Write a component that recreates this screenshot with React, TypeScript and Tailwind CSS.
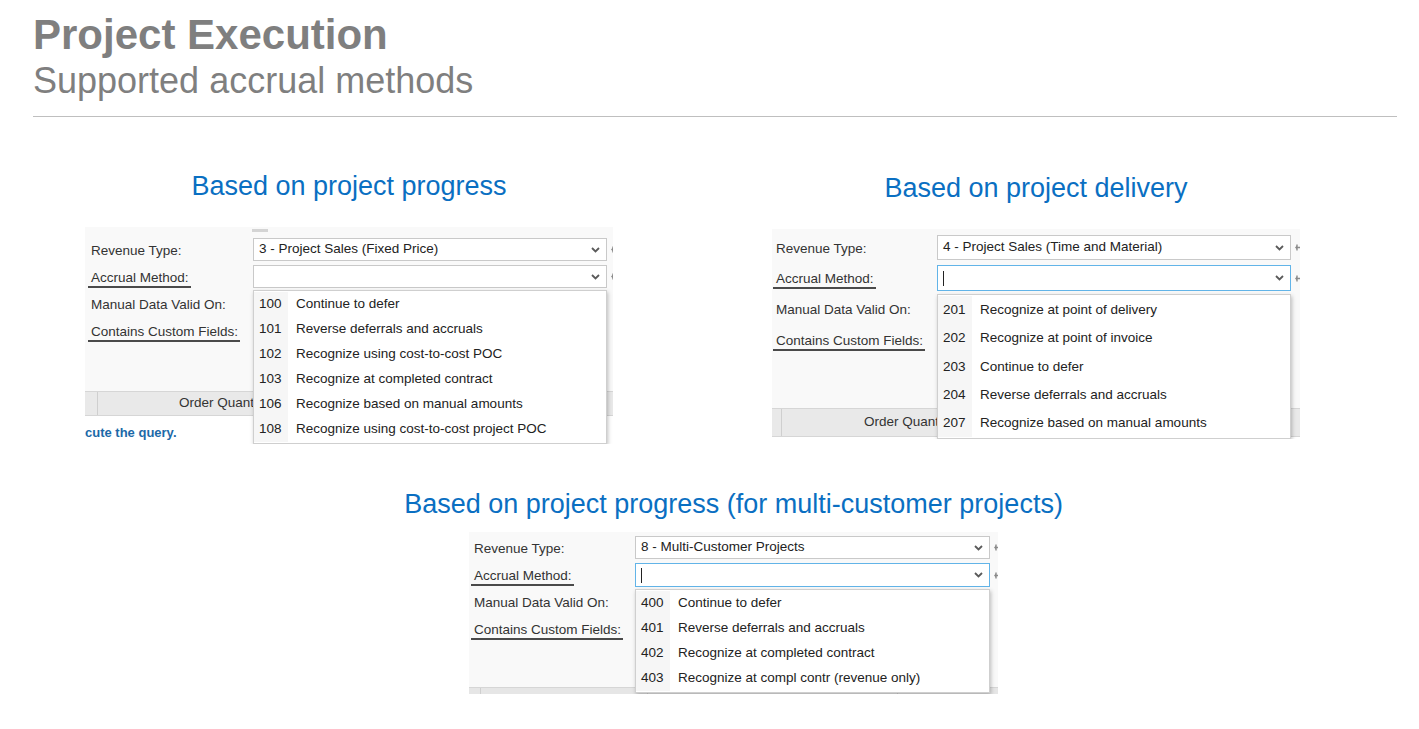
import type { ReactNode } from "react";

type Item = [string, string];

const ITEMS_A: Item[] = [
  ["100", "Continue to defer"],
  ["101", "Reverse deferrals and accruals"],
  ["102", "Recognize using cost-to-cost POC"],
  ["103", "Recognize at completed contract"],
  ["106", "Recognize based on manual amounts"],
  ["108", "Recognize using cost-to-cost project POC"],
];

const ITEMS_B: Item[] = [
  ["201", "Recognize at point of delivery"],
  ["202", "Recognize at point of invoice"],
  ["203", "Continue to defer"],
  ["204", "Reverse deferrals and accruals"],
  ["207", "Recognize based on manual amounts"],
];

const ITEMS_C: Item[] = [
  ["400", "Continue to defer"],
  ["401", "Reverse deferrals and accruals"],
  ["402", "Recognize at completed contract"],
  ["403", "Recognize at compl contr (revenue only)"],
];

function Chevron() {
  return (
    <svg width="9" height="6" viewBox="0 0 9 6" className="mr-[6px] shrink-0">
      <path d="M1 1 L4.5 4.5 L8 1" fill="none" stroke="#5a5a5a" strokeWidth="1.8" />
    </svg>
  );
}

// the value-help pin that sits just past each field (cut off by the screenshot edge)
function Pin() {
  return (
    <svg width="8" height="9" viewBox="0 0 8 9" className="ml-[3px] shrink-0">
      <path d="M1 4.5 L3 2.5 V6.5 Z" fill="#8a8a8a" />
      <path d="M3 1.5 V7.5 M3 4.5 H8" stroke="#8a8a8a" strokeWidth="1.4" />
    </svg>
  );
}

function Select({ value, focused, className }: { value?: string; focused?: boolean; className: string }) {
  return (
    <div
      className={`flex shrink-0 items-center bg-white border ${
        focused ? "border-[#62b4e8]" : "border-[#c9c9c9]"
      } ${className}`}
    >
      <div className="flex flex-1 items-center pl-[5px] text-[13.5px] text-[#222]">
        {focused ? <span className="h-[15px] w-px bg-[#222]" /> : value}
      </div>
      <Chevron />
    </div>
  );
}

function Label({ text, line }: { text: string; line?: boolean }) {
  if (!line) return <span className="text-[13.5px] text-[#333]">{text}</span>;
  return (
    <span className="-ml-[3px] border-b-2 border-[#4a4a4a] pb-[1px] pl-[3px] pr-[2px] text-[13.5px] text-[#333]">
      {text}
    </span>
  );
}

function Row({ labelW, className, children }: { labelW: string; className: string; children: ReactNode }) {
  return (
    <div className={`flex items-center ${className}`}>
      <div className={`shrink-0 ${labelW}`}>{children}</div>
    </div>
  );
}

function Dropdown({ items, itemH, className }: { items: Item[]; itemH: string; className: string }) {
  return (
    <div className={`absolute border border-[#cfcfcf] bg-white py-[1px] shadow-[1px_2px_4px_rgba(0,0,0,0.25)] ${className}`}>
      {items.map(([code, text]) => (
        <div key={code} className={`flex ${itemH}`}>
          <div className="flex w-[34px] items-center bg-[#f6f6f6] pl-[5px] text-[13.5px] text-[#222]">{code}</div>
          <div className="flex items-center pl-[8px] text-[13.5px] text-[#222]">{text}</div>
        </div>
      ))}
    </div>
  );
}

function PanelA() {
  return (
    <div className="relative h-[217px] w-[528px] overflow-hidden bg-[#f9f9f9]">
      <div className="ml-[167px] mt-[2px] h-[3px] w-[16px] bg-[#d4d4d4]" />
      <div className="mt-[6px] pl-[6px]">
        <div className="flex h-[23px] items-center">
          <div className="w-[162px] shrink-0"><Label text="Revenue Type:" /></div>
          <Select value="3 - Project Sales (Fixed Price)" className="h-[23px] w-[354px]" />
          <Pin />
        </div>
        <div className="mt-[4px] flex h-[23px] items-center">
          <div className="w-[162px] shrink-0"><Label text="Accrual Method:" line /></div>
          <Select className="h-[23px] w-[354px]" />
          <Pin />
        </div>
        <Row labelW="w-[162px]" className="mt-[3px] h-[26px]"><Label text="Manual Data Valid On:" /></Row>
        <Row labelW="w-[162px]" className="h-[28px]"><Label text="Contains Custom Fields:" line /></Row>
      </div>
      <div className="mt-[46px] flex h-[25px] border-y border-[#d6d6d6] bg-[#e9e9e9] text-[13.5px] text-[#333]">
        <div className="w-[13px] shrink-0 border-r border-[#cfcfcf]" />
        <div className="flex items-center whitespace-nowrap pl-[81px]">Order Quant</div>
      </div>
      <div className="flex h-[30px] items-center bg-white pt-[4px] text-[13px] font-bold text-[#1c69a8]">
        cute the query.
      </div>
      <Dropdown items={ITEMS_A} itemH="h-[25px]" className="left-[168px] top-[63px] w-[354px]" />
    </div>
  );
}

function PanelB() {
  return (
    <div className="relative h-[210px] w-[528px] overflow-hidden bg-white">
      <div className="bg-[#f9f9f9] pl-[4px] pt-[6px] pb-[52px]">
        <div className="flex h-[25px] items-center">
          <div className="w-[161px] shrink-0"><Label text="Revenue Type:" /></div>
          <Select value="4 - Project Sales (Time and Material)" className="h-[25px] w-[354px]" />
          <Pin />
        </div>
        <div className="mt-[5px] flex h-[26px] items-center">
          <div className="w-[161px] shrink-0"><Label text="Accrual Method:" line /></div>
          <Select focused className="h-[26px] w-[354px]" />
          <Pin />
        </div>
        <Row labelW="w-[161px]" className="mt-[2px] h-[31px]"><Label text="Manual Data Valid On:" /></Row>
        <Row labelW="w-[161px]" className="h-[32px]"><Label text="Contains Custom Fields:" line /></Row>
      </div>
      <div className="flex h-[29px] border-y border-[#d6d6d6] bg-[#e9e9e9] text-[13.5px] text-[#333]">
        <div className="w-[10px] shrink-0 border-r border-[#cfcfcf]" />
        <div className="flex items-center whitespace-nowrap pl-[82px]">Order Quant</div>
      </div>
      <Dropdown items={ITEMS_B} itemH="h-[28.25px]" className="left-[165px] top-[65px] w-[354px]" />
    </div>
  );
}

function PanelC() {
  return (
    <div className="relative h-[162px] w-[529px] overflow-hidden bg-[#f9f9f9]">
      <div className="pl-[5px] pt-[4px]">
        <div className="flex h-[23px] items-center">
          <div className="w-[161px] shrink-0"><Label text="Revenue Type:" /></div>
          <Select value="8 - Multi-Customer Projects" className="h-[23px] w-[355px]" />
          <Pin />
        </div>
        <div className="mt-[4px] flex h-[24px] items-center">
          <div className="w-[161px] shrink-0"><Label text="Accrual Method:" line /></div>
          <Select focused className="h-[24px] w-[355px]" />
          <Pin />
        </div>
        <Row labelW="w-[161px]" className="mt-[2px] h-[26px]"><Label text="Manual Data Valid On:" /></Row>
        <Row labelW="w-[161px]" className="h-[27px]"><Label text="Contains Custom Fields:" line /></Row>
      </div>
      <div className="mt-[45px] flex h-[7px] border-t border-[#d6d6d6] bg-[#e6e6e6]">
        <div className="w-[12px] border-r border-[#cfcfcf]" />
        <div className="w-[167px] border-r border-[#cfcfcf]" />
        <div className="w-[250px] border-r border-[#cfcfcf]" />
      </div>
      <Dropdown items={ITEMS_C} itemH="h-[25px]" className="left-[166px] top-[57px] w-[355px]" />
    </div>
  );
}

export default function App() {
  return (
    <div className="min-h-screen overflow-hidden bg-white font-['Liberation_Sans',Arial,sans-serif]">
      <header className="px-[33px] pt-[14px]">
        <h1 className="text-[42px] font-bold leading-none text-[#7f7f7f]">Project Execution</h1>
        <p className="mt-[7px] text-[36px] leading-none text-[#7f7f7f]">Supported accrual methods</p>
      </header>
      <div className="ml-[33px] mt-[17px] h-[1px] w-[1364px] bg-[#bfbfbf]" />

      <div className="mt-[56px] flex gap-[159px] pl-[85px]">
        <section className="flex w-[528px] flex-col items-center">
          <h2 className="whitespace-nowrap text-[27px] leading-none text-[#0a6fc2]">Based on project progress</h2>
          <div className="mt-[27px]"><PanelA /></div>
        </section>
        <section className="flex w-[528px] flex-col items-center pt-[2px]">
          <h2 className="whitespace-nowrap text-[27px] leading-none text-[#0a6fc2]">Based on project delivery</h2>
          <div className="mt-[27px]"><PanelB /></div>
        </section>
      </div>

      <section className="ml-[469px] mt-[47px] flex w-[529px] flex-col items-center">
        <h2 className="whitespace-nowrap text-[27px] leading-none text-[#0a6fc2]">
          Based on project progress (for multi-customer projects)
        </h2>
        <div className="mt-[14px]"><PanelC /></div>
      </section>
    </div>
  );
}
